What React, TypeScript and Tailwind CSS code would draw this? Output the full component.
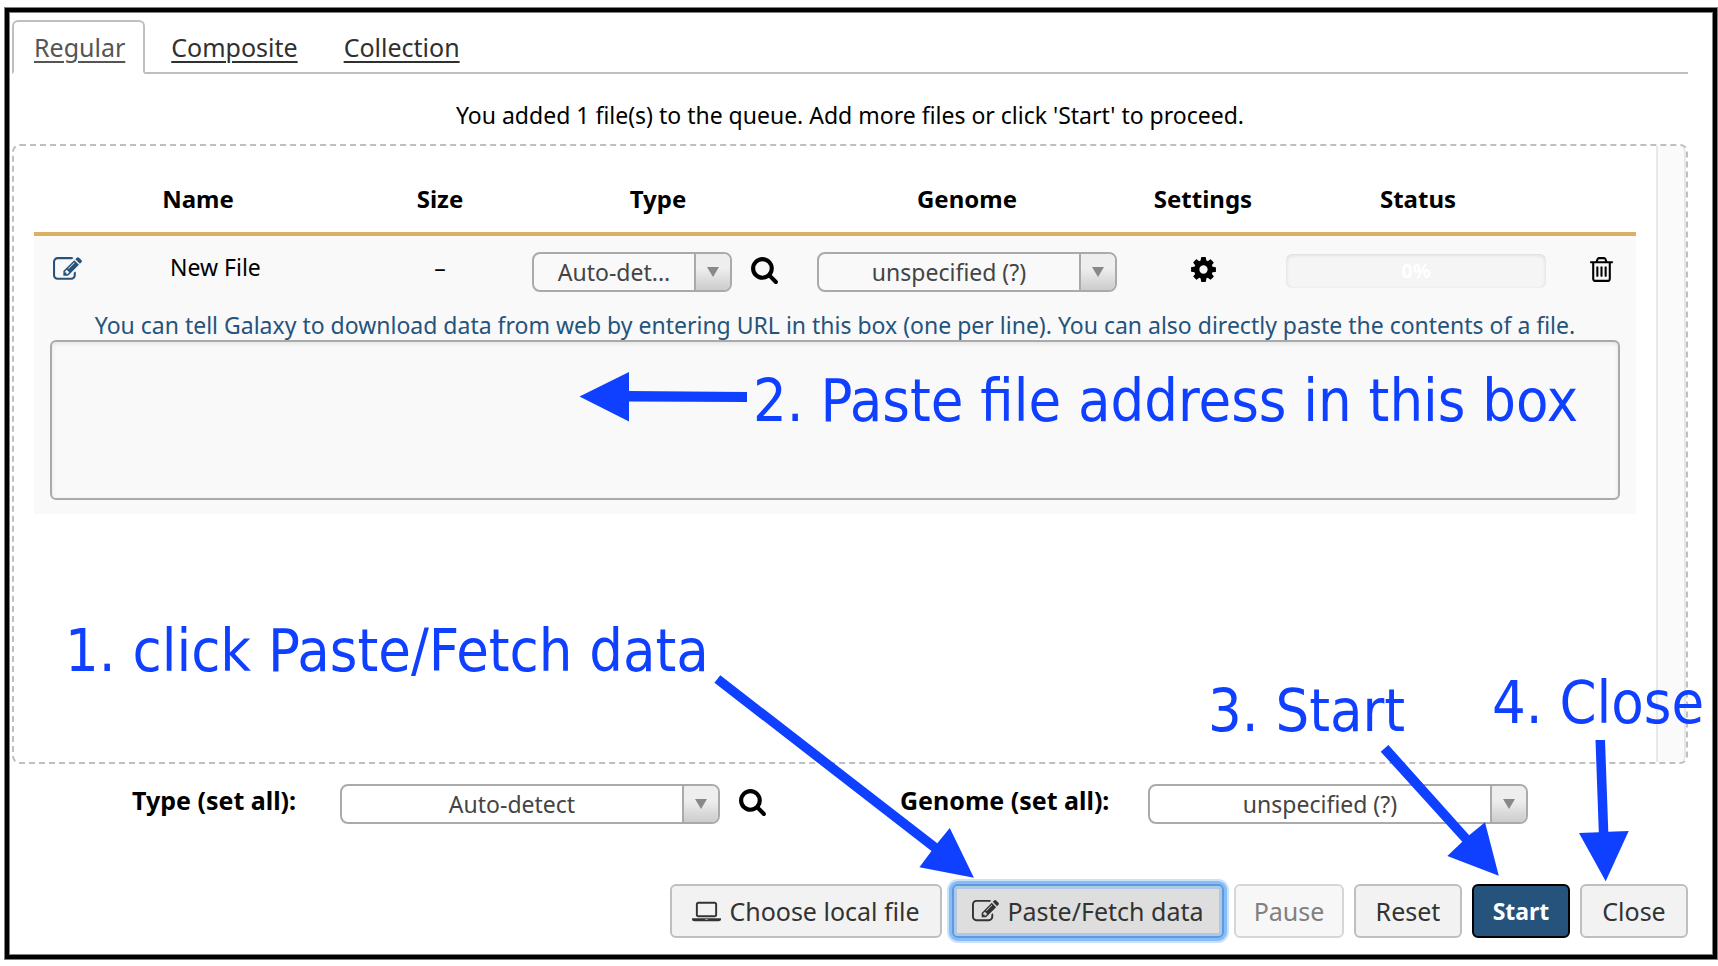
import { useState } from "react";
import type { ReactNode } from "react";

const SEARCH =
  "M1216 832q0-185-131.5-316.5t-316.5-131.5-316.5 131.5-131.5 316.5 131.5 316.5 316.5 131.5 316.5-131.5 131.5-316.5zm512 832q0 52-38 90t-90 38q-54 0-90-38l-343-342q-179 124-399 124-143 0-273.5-55.5t-225-150-150-225-55.5-273.5 55.5-273.5 150-225 225-150 273.5-55.5 273.5 55.5 225 150 150 225 55.5 273.5q0 220-124 399l343 343q37 37 37 90z";
const EDIT =
  "M888 1184l116-116-152-152-116 116v56h96v96h56zm440-720q-16-16-33 1l-350 350q-17 17-1 33t33-1l350-350q17-17 1-33zm80 594v190q0 119-84.5 203.5t-203.5 84.5h-832q-119 0-203.5-84.5t-84.5-203.5v-832q0-119 84.5-203.5t203.5-84.5h832q63 0 117 25 15 7 18 23 3 17-9 29l-49 49q-14 14-32 8-23-6-45-6h-832q-66 0-113 47t-47 113v832q0 66 47 113t113 47h832q66 0 113-47t47-113v-126q0-13 9-22l64-64q15-15 35-7t20 29zm-96-738l288 288-672 672h-288v-288zm444 132l-92 92-288-288 92-92q28-28 68-28t68 28l152 152q28 28 28 68t-28 68z";
const COG =
  "M1152 896q0-106-75-181t-181-75-181 75-75 181 75 181 181 75 181-75 75-181zm512-109v222q0 12-8 23t-20 13l-185 28q-19 54-39 91 35 50 107 138 10 12 10 25t-9 23q-27 37-99 108t-94 71q-12 0-26-9l-138-108q-44 23-91 38-16 136-29 186-7 28-36 28h-222q-14 0-24.5-8.5t-11.5-21.5l-28-184q-49-16-90-37l-141 107q-10 9-25 9-14 0-25-11-126-114-165-168-7-10-7-23 0-12 8-23 15-21 51-66.5t54-70.5q-27-50-41-99l-183-27q-13-2-21-12.5t-8-23.5v-222q0-12 8-23t19-13l186-28q14-46 39-92-40-57-107-138-10-12-10-24 0-10 9-23 26-36 98.5-107.5t94.5-71.5q13 0 26 10l138 107q44-23 91-38 16-136 29-186 7-28 36-28h222q14 0 24.5 8.5t11.5 21.5l28 184q49 16 90 37l142-107q9-9 24-9 13 0 25 10 129 119 165 170 7 8 7 22 0 12-8 23-15 21-51 66.5t-54 70.5q26 50 41 98l183 28q13 2 21 12.5t8 23.5z";
const TRASH =
  "M704 736v576q0 14-9 23t-23 9h-64q-14 0-23-9t-9-23v-576q0-14 9-23t23-9h64q14 0 23 9t9 23zm256 0v576q0 14-9 23t-23 9h-64q-14 0-23-9t-9-23v-576q0-14 9-23t23-9h64q14 0 23 9t9 23zm256 0v576q0 14-9 23t-23 9h-64q-14 0-23-9t-9-23v-576q0-14 9-23t23-9h64q14 0 23 9t9 23zm128 724v-948h-896v948q0 22 7 40.5t14.5 27 10.5 8.5h832q3 0 10.5-8.5t14.5-27 7-40.5zm-672-1076h448l-48-117q-7-9-17-11h-317q-10 2-17 11zm928 32v64q0 14-9 23t-23 9h-96v948q0 83-47 143.5t-113 60.5h-832q-66 0-113-58.5t-47-141.5v-952h-96q-14 0-23-9t-9-23v-64q0-14 9-23t23-9h309l70-167q15-37 54-63t79-26h320q40 0 79 26t54 63l70 167h309q14 0 23 9t9 23z";
const LAPTOP =
  "M416 1280q-66 0-113-47t-47-113v-704q0-66 47-113t113-47h1088q66 0 113 47t47 113v704q0 66-47 113t-113 47h-1088zm-32-864v704q0 13 9.5 22.5t22.5 9.5h1088q13 0 22.5-9.5t9.5-22.5v-704q0-13-9.5-22.5t-22.5-9.5h-1088q-13 0-22.5 9.5t-9.5 22.5zm1376 928h160v96q0 40-47 68t-113 28h-1600q-66 0-113-28t-47-68v-96h1760zm-720 96q16 0 16-16t-16-16h-160q-16 0-16 16t16 16h160z";

function Icon({ path, wide, className }: { path: string; wide?: boolean; className: string }) {
  return (
    <svg viewBox={wide ? "0 0 1920 1792" : "0 0 1792 1792"} className={className} fill="currentColor" aria-hidden="true">
      <path d={path} />
    </svg>
  );
}

function IconButton({ path, label, className = "" }: { path: string; label: string; className?: string }) {
  return (
    <button type="button" aria-label={label} className={`mt-[3px] block shrink-0 ${className}`}>
      <Icon path={path} className="size-[29px]" />
    </button>
  );
}

function Dropdown({ id, label, options, className }: { id: string; label?: string; options: string[]; className: string }) {
  return (
    <div className={`relative h-10 shrink-0 overflow-hidden rounded-lg border-2 border-[#aaa] text-[#444] ${className}`}>
      <select
        id={id}
        aria-label={label}
        className="block h-full w-full appearance-none bg-transparent pr-[36px] text-center text-[23px] leading-9 outline-none [text-align-last:center]"
      >
        {options.map((o) => (
          <option key={o}>{o}</option>
        ))}
      </select>
      <span className="pointer-events-none absolute inset-y-0 right-0 flex w-9 items-center justify-center border-l-2 border-[#aaa] bg-linear-to-b from-[#eee] from-40% to-[#ccc]">
        <svg viewBox="0 0 12 10" className="h-[10px] w-3" fill="#888" aria-hidden="true">
          <path d="M0 0h12L6 10z" />
        </svg>
      </span>
    </div>
  );
}

function Tab({ active, onClick, children }: { active: boolean; onClick: () => void; children: ReactNode }) {
  return (
    <a
      href="#"
      role="tab"
      aria-selected={active}
      onClick={(e) => {
        e.preventDefault();
        onClick();
      }}
      className={`-mb-[2px] mr-1 block rounded-t-md border-2 pr-[18px] pl-5 text-[25px] leading-[50px] underline decoration-2 underline-offset-4 ${
        active ? "border-[#bfbfbf] border-b-white bg-white text-[#555]" : "border-transparent text-[#303030]"
      }`}
    >
      {children}
    </a>
  );
}

const BUTTON = "flex h-[54px] items-center justify-center gap-2 rounded-md border-2 leading-none";
const PLAIN = "border-[#bfbfbf] bg-[#f2f2f2] text-[25px] text-[#333]";
const NOTE = "absolute whitespace-nowrap font-['DejaVu_Sans_Condensed','DejaVu_Sans',sans-serif] text-[59px] leading-none";

const TABS = ["Regular", "Composite", "Collection"];

export default function App() {
  const [tab, setTab] = useState("Regular");
  const [content, setContent] = useState("");

  return (
    <main className="relative flex min-h-screen flex-col bg-white pt-2 pr-px pb-[7px] pl-[5px] font-['Noto_Sans','Open_Sans',sans-serif] text-[23px] text-black">
      <div className="flex-1 border-4 border-black pt-2 pr-[25px] pb-4 pl-[3px] shadow-[0_0_0_1px_#808080,inset_0_0_0_1px_#808080]">
        <div role="tablist" className="flex border-b-2 border-[#bfbfbf]">
          {TABS.map((t) => (
            <Tab key={t} active={tab === t} onClick={() => setTab(t)}>
              {t}
            </Tab>
          ))}
        </div>

        <p className="pt-6 pb-3 text-center leading-[34px]">
          You added 1 file(s) to the queue. Add more files or click 'Start' to proceed.
        </p>

        <section className="flex min-h-[620px] rounded-lg border-2 border-dashed border-[#bfbfbf]">
          <div className="flex-1 px-5 pt-5">
            <table className="w-full table-fixed border-collapse">
              <colgroup>
                <col className="w-[96px]" />
                <col className="w-[232px]" />
                <col className="w-[156px]" />
                <col className="w-[280px]" />
                <col className="w-[338px]" />
                <col className="w-[134px]" />
                <col className="w-[296px]" />
                <col className="w-[70px]" />
              </colgroup>
              <thead>
                <tr className="h-[68px] border-b-4 border-[#d8b166] text-[24px] font-bold">
                  <th colSpan={2}>Name</th>
                  <th>Size</th>
                  <th>Type</th>
                  <th>Genome</th>
                  <th>Settings</th>
                  <th>Status</th>
                  <td />
                </tr>
              </thead>
              <tbody className="bg-[#f9f9f9]">
                <tr className="h-[76px] align-top">
                  <td className="pt-4 pl-[19px] text-[#25537b]">
                    <Icon path={EDIT} className="mt-[3px] size-[29px]" />
                  </td>
                  <td className="pt-4 pl-10 leading-[30px]">New File</td>
                  <td className="pt-4 text-center leading-[30px]">–</td>
                  <td className="pt-4 pl-[14px]">
                    <div className="flex items-start gap-[18px]">
                      <Dropdown id="file-type" label="Type" options={["Auto-det..."]} className="w-[200px]" />
                      <IconButton path={SEARCH} label="Search types" />
                    </div>
                  </td>
                  <td className="pt-4">
                    <Dropdown id="file-genome" label="Genome" options={["unspecified (?)"]} className="mx-auto w-[300px]" />
                  </td>
                  <td className="pt-4">
                    <IconButton path={COG} label="Settings" className="mx-auto" />
                  </td>
                  <td className="pt-[18px] pr-5 pl-4">
                    <div
                      role="progressbar"
                      aria-label="Upload progress"
                      aria-valuenow={0}
                      className="h-[34px] rounded-md bg-[#f5f5f5] text-center text-[20px] leading-[34px] font-bold text-white shadow-[inset_0_1px_4px_rgba(0,0,0,0.12)]"
                    >
                      0%
                    </div>
                  </td>
                  <td className="pt-4">
                    <IconButton path={TRASH} label="Remove" className="mx-auto" />
                  </td>
                </tr>
                <tr>
                  <td colSpan={8} className="px-4 pb-[14px]">
                    <label htmlFor="file-content" className="block text-center leading-[30px] whitespace-nowrap text-[#25537b]">
                      You can tell Galaxy to download data from web by entering URL in this box (one per line). You can also directly
                      paste the contents of a file.
                    </label>
                    <textarea
                      id="file-content"
                      value={content}
                      onChange={(e) => setContent(e.target.value)}
                      className="block h-40 w-full resize-none rounded-md border-2 border-[#aaa] bg-transparent p-3 shadow-[inset_0_2px_4px_rgba(0,0,0,0.08)] outline-none"
                    />
                  </td>
                </tr>
              </tbody>
            </table>
          </div>
          <div className="w-[30px] rounded-r-md border-x-2 border-[#e8e8e8] bg-[#fafafa]" />
        </section>

        <div className="flex items-start justify-between pt-5 pr-40 pl-[120px]">
          <div className="flex items-start">
            <label htmlFor="all-type" className="w-52 text-[25px] leading-8 font-bold">
              Type (set all):
            </label>
            <Dropdown id="all-type" options={["Auto-detect"]} className="mr-[18px] w-[380px]" />
            <IconButton path={SEARCH} label="Search all types" />
          </div>
          <div className="flex items-start">
            <label htmlFor="all-genome" className="w-[248px] text-[25px] leading-8 font-bold">
              Genome (set all):
            </label>
            <Dropdown id="all-genome" options={["unspecified (?)"]} className="w-[380px]" />
          </div>
        </div>

        <div className="mt-[60px] flex justify-end gap-[10px]">
          <button type="button" className={`${BUTTON} ${PLAIN} w-[272px]`}>
            <Icon path={LAPTOP} wide className="h-[27px] w-[29px]" />
            Choose local file
          </button>
          <button
            type="button"
            className={`${BUTTON} w-[272px] border-[#5f9ade] bg-[#dedede] text-[25px] text-[#333] shadow-[0_0_0_3px_#86bcf8,0_0_0_5px_#cbe2fb,inset_0_0_0_3px_#adc9e6]`}
          >
            <Icon path={EDIT} className="size-[27px]" />
            Paste/Fetch data
          </button>
          <button type="button" disabled className={`${BUTTON} w-[110px] border-[#d6d6d6] bg-[#f7f7f7] text-[25px] text-[#808080]`}>
            Pause
          </button>
          <button type="button" className={`${BUTTON} ${PLAIN} w-[108px]`}>
            Reset
          </button>
          <button type="button" className={`${BUTTON} w-[98px] border-black bg-[#25537b] text-[23px] font-bold text-white`}>
            Start
          </button>
          <button type="button" className={`${BUTTON} ${PLAIN} w-[108px]`}>
            Close
          </button>
        </div>
      </div>

      <div className="pointer-events-none absolute inset-0 text-[#1040ff]">
        <svg viewBox="0 0 1718 966" className="absolute top-0 left-0 h-[966px] w-[1718px]" fill="currentColor" aria-hidden="true">
          <path d="M579.5 396.5L629 372V391L747 392V402L629 401.5V421.5Z" />
          <path d="M720.3 675.3L937.3 843.3L949.8 828L973.9 877.7L919.4 867.3L931.5 851L714.4 682.7Z" />
          <path d="M1388.4 745L1469.2 835.3L1485 822.3L1498.8 875.7L1447.3 856L1462.3 841.7L1380.7 751.7Z" />
          <path d="M1595.5 740H1605L1608.3 831.7L1628.7 831L1605.7 881.3L1579 833L1598.8 832.3Z" />
        </svg>
        <p className={`${NOTE} top-[371px] left-[753px]`}>2. Paste file address in this box</p>
        <p className={`${NOTE} top-[621px] left-[65px]`}>1. click Paste/Fetch data</p>
        <p className={`${NOTE} top-[681px] left-[1208px]`}>3. Start</p>
        <p className={`${NOTE} top-[673px] left-[1492px]`}>4. Close</p>
      </div>
    </main>
  );
}
